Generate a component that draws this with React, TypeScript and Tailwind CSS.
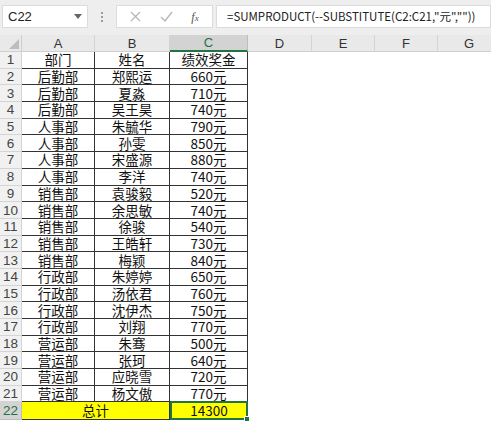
import React from "react";

const rows: [string, string, string][] = [
  ["部门", "姓名", "绩效奖金"],
  ["后勤部", "郑熙运", "660元"],
  ["后勤部", "夏淼", "710元"],
  ["后勤部", "吴王昊", "740元"],
  ["人事部", "朱毓华", "790元"],
  ["人事部", "孙雯", "850元"],
  ["人事部", "宋盛源", "880元"],
  ["人事部", "李洋", "740元"],
  ["销售部", "袁骏毅", "520元"],
  ["销售部", "余思敏", "740元"],
  ["销售部", "徐骏", "540元"],
  ["销售部", "王皓轩", "730元"],
  ["销售部", "梅颖", "840元"],
  ["行政部", "朱婷婷", "650元"],
  ["行政部", "汤依君", "760元"],
  ["行政部", "沈伊杰", "750元"],
  ["行政部", "刘翔", "770元"],
  ["营运部", "朱骞", "500元"],
  ["营运部", "张珂", "640元"],
  ["营运部", "应晓雪", "720元"],
  ["营运部", "杨文傲", "770元"],
];

const font = { fontFamily: '"Noto Sans CJK SC", "Liberation Sans", sans-serif' };
const latin = { fontFamily: '"Liberation Sans", sans-serif' };
const cols = ["A", "B", "C", "D", "E", "F", "G"];
const gridCols = "grid grid-cols-[22px_73px_75px_78px_64px_63px_63px_63px]";
const cell = "border-r border-b border-[#333] flex items-center justify-center overflow-hidden text-[13.5px] leading-[15px] text-[#111]";

export default function App() {
  return (
    <div className="w-[491px] h-[422px] overflow-hidden bg-white text-black" style={font}>
      {/* formula bar */}
      <div className="h-[35px] bg-[#eeeeee] flex items-start pt-[5px] pl-[2px]">
        <div className="w-[86px] h-[23px] bg-white border border-[#dcdcdc] flex items-center justify-between pl-[5px] pr-[5px] text-[13px] text-[#222]">
          <span style={latin}>C22</span>
          <svg width="8" height="5" viewBox="0 0 8 5"><path d="M0 0h8L4 5z" fill="#666" /></svg>
        </div>
        <div className="w-[28px] h-[23px] flex flex-col items-center justify-center gap-[2px]">
          <span className="w-[2px] h-[2px] bg-[#9a9a9a]" />
          <span className="w-[2px] h-[2px] bg-[#9a9a9a]" />
          <span className="w-[2px] h-[2px] bg-[#9a9a9a]" />
        </div>
        <div className="w-[97px] h-[23px] bg-white border border-[#dcdcdc] flex items-center justify-around px-[4px]">
          <svg width="11" height="11" viewBox="0 0 11 11"><path d="M1 1l9 9M10 1l-9 9" stroke="#b5b5b5" strokeWidth="1.2" /></svg>
          <svg width="13" height="11" viewBox="0 0 13 11"><path d="M1 6l4 4 7-9" stroke="#b5b5b5" strokeWidth="1.3" fill="none" /></svg>
          <span className="text-[12px] italic text-[#555]" style={{ fontFamily: '"Liberation Serif", serif' }}>f<span className="text-[9px]">x</span></span>
        </div>
        <div className="ml-[3px] flex-1 h-[23px] bg-white border border-[#dcdcdc] flex items-center pl-[10px] text-[11.5px] text-[#222] whitespace-nowrap overflow-hidden">
          =SUMPRODUCT(--SUBSTITUTE(C2:C21,"元",""))
        </div>
      </div>

      {/* column headers */}
      <div className={`${gridCols} h-[17px] bg-[#e9e9e9] border-b border-[#cfcfcf]`}>
        <div className="relative border-r border-[#cfcfcf]">
          <svg className="absolute right-[2px] bottom-[2px]" width="10" height="10" viewBox="0 0 10 10"><path d="M10 0v10H0z" fill="#bdbdbd" /></svg>
        </div>
        {cols.map((c) => (
          <div
            key={c}
            className={
              c === "C"
                ? "bg-[#d3d3d3] text-[#217346] border-b-2 border-[#217346] border-r border-r-[#bdbdbd] flex items-center justify-center text-[13px] leading-[15px] -mb-[1px]"
                : "border-r border-[#d4d4d4] flex items-center justify-center text-[13px] leading-[15px] text-[#333]"
            }
            style={latin}
          >
            {c}
          </div>
        ))}
      </div>

      {/* rows */}
      {rows.map((r, i) => (
        <div key={i} className={`${gridCols} h-[16.7px]`}>
          <div className="bg-[#f1f1f1] border-r border-b border-[#d4d4d4] flex items-center justify-center overflow-hidden text-[13.5px] leading-[15px] text-[#444]" style={latin}>
            {i + 1}
          </div>
          <div className={cell}>{r[0]}</div>
          <div className={cell}>{r[1]}</div>
          <div className={cell}>{r[2]}</div>
          <div />
          <div />
          <div />
          <div />
        </div>
      ))}

      {/* total row */}
      <div className={`${gridCols} h-[17px]`}>
        <div className="bg-[#d3d3d3] border-r border-b border-[#bdbdbd] flex items-center justify-center text-[13.5px] leading-[15px] text-[#217346]" style={latin}>
          22
        </div>
        <div className={`col-span-2 bg-[#ffff00] ${cell}`}>总计</div>
        <div className="relative bg-[#ffff00] border-2 border-[#217346] -mt-[1px] flex items-center justify-center text-[13.5px] leading-[15px] text-[#111]">
          14300
          <span className="absolute -right-[4px] -bottom-[4px] w-[6px] h-[6px] bg-[#217346] border border-white" />
        </div>
        <div />
        <div />
        <div />
        <div />
      </div>
    </div>
  );
}
